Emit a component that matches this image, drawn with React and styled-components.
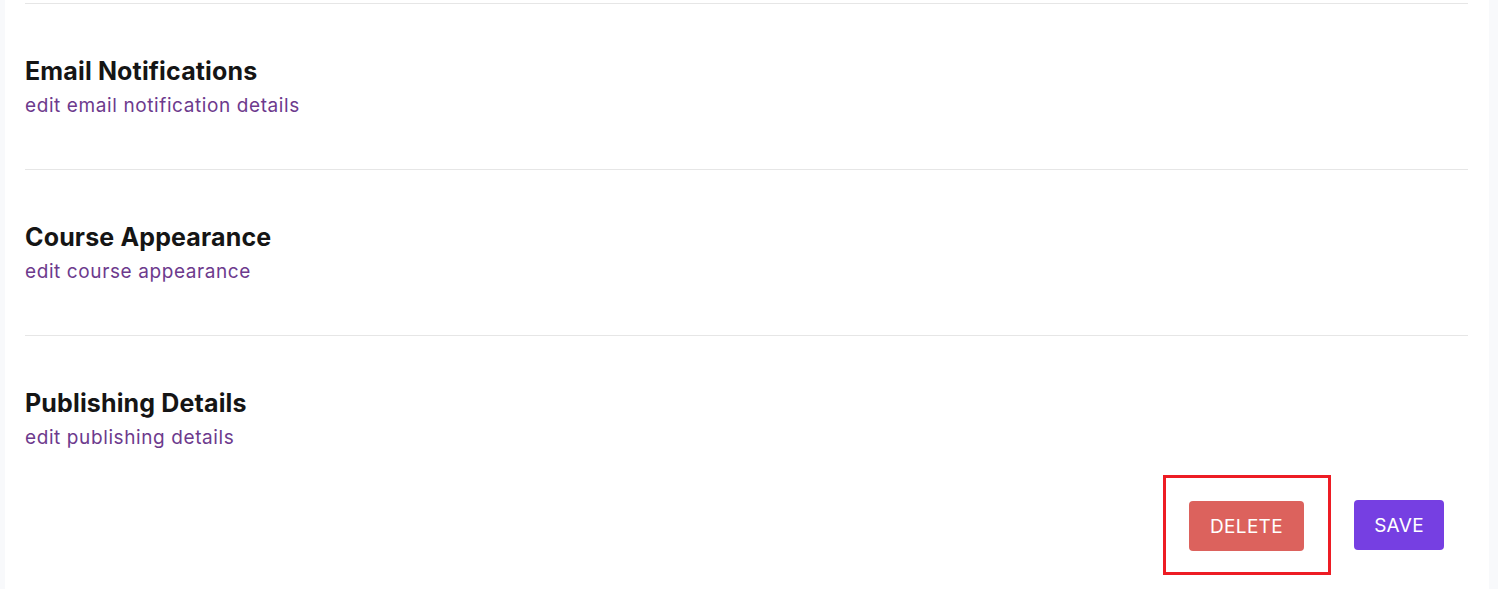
import React from 'react';
import styled, { createGlobalStyle } from 'styled-components';

const GlobalStyle = createGlobalStyle`
  html, body {
    margin: 0;
    padding: 0;
    background: #f8f9fb;
    font-family: Inter, 'Noto Sans', sans-serif;
  }
`;

const Page = styled.div`
  display: flex;
  height: 589px;
  padding: 0 9px 0 5px;
  overflow: hidden;
`;

const Panel = styled.div`
  flex: 1;
  background: #ffffff;
  padding: 3px 21px 0 20px;
`;

const Section = styled.section`
  border-top: 1px solid #e6e6e6;
  padding: 52px 0 ${props => (props.$last ? '0' : '49px')};
`;

const Title = styled.h2`
  margin: 0;
  font-size: 25px;
  line-height: 31px;
  font-weight: 700;
  color: #151515;
  letter-spacing: 0.15px;
`;

const Subtitle = styled.p`
  margin: 5px 0 0;
  font-size: 19px;
  line-height: 28px;
  color: #6d3a8d;
  letter-spacing: 0.6px;
`;

const Actions = styled.div`
  display: flex;
  justify-content: flex-end;
  align-items: center;
  gap: 23px;
  margin-top: 23px;
  padding-right: 24px;
`;

const Highlight = styled.div`
  border: 3px solid #ed1c24;
  padding: 23px 24px 21px 23px;
`;

const Button = styled.button`
  width: ${props => props.$w}px;
  height: 50px;
  padding: 0;
  border: none;
  border-radius: 4px;
  background: ${props => props.$bg};
  color: #ffffff;
  font-family: Inter, 'Noto Sans', sans-serif;
  font-size: 19px;
  letter-spacing: 0.3px;
  cursor: pointer;
`;

const sections = [
  { title: 'Email Notifications', text: 'edit email notification details' },
  { title: 'Course Appearance', text: 'edit course appearance' },
  { title: 'Publishing Details', text: 'edit publishing details' },
];

export default function App() {
  return (
    <>
      <GlobalStyle />
      <Page>
        <Panel>
          {sections.map((s, i) => (
            <Section key={s.title} $last={i === sections.length - 1}>
              <Title>{s.title}</Title>
              <Subtitle>{s.text}</Subtitle>
            </Section>
          ))}
          <Actions>
            <Highlight>
              <Button $bg="#dc625d" $w={115}>DELETE</Button>
            </Highlight>
            <Button $bg="#763fe2" $w={90}>SAVE</Button>
          </Actions>
        </Panel>
      </Page>
    </>
  );
}
